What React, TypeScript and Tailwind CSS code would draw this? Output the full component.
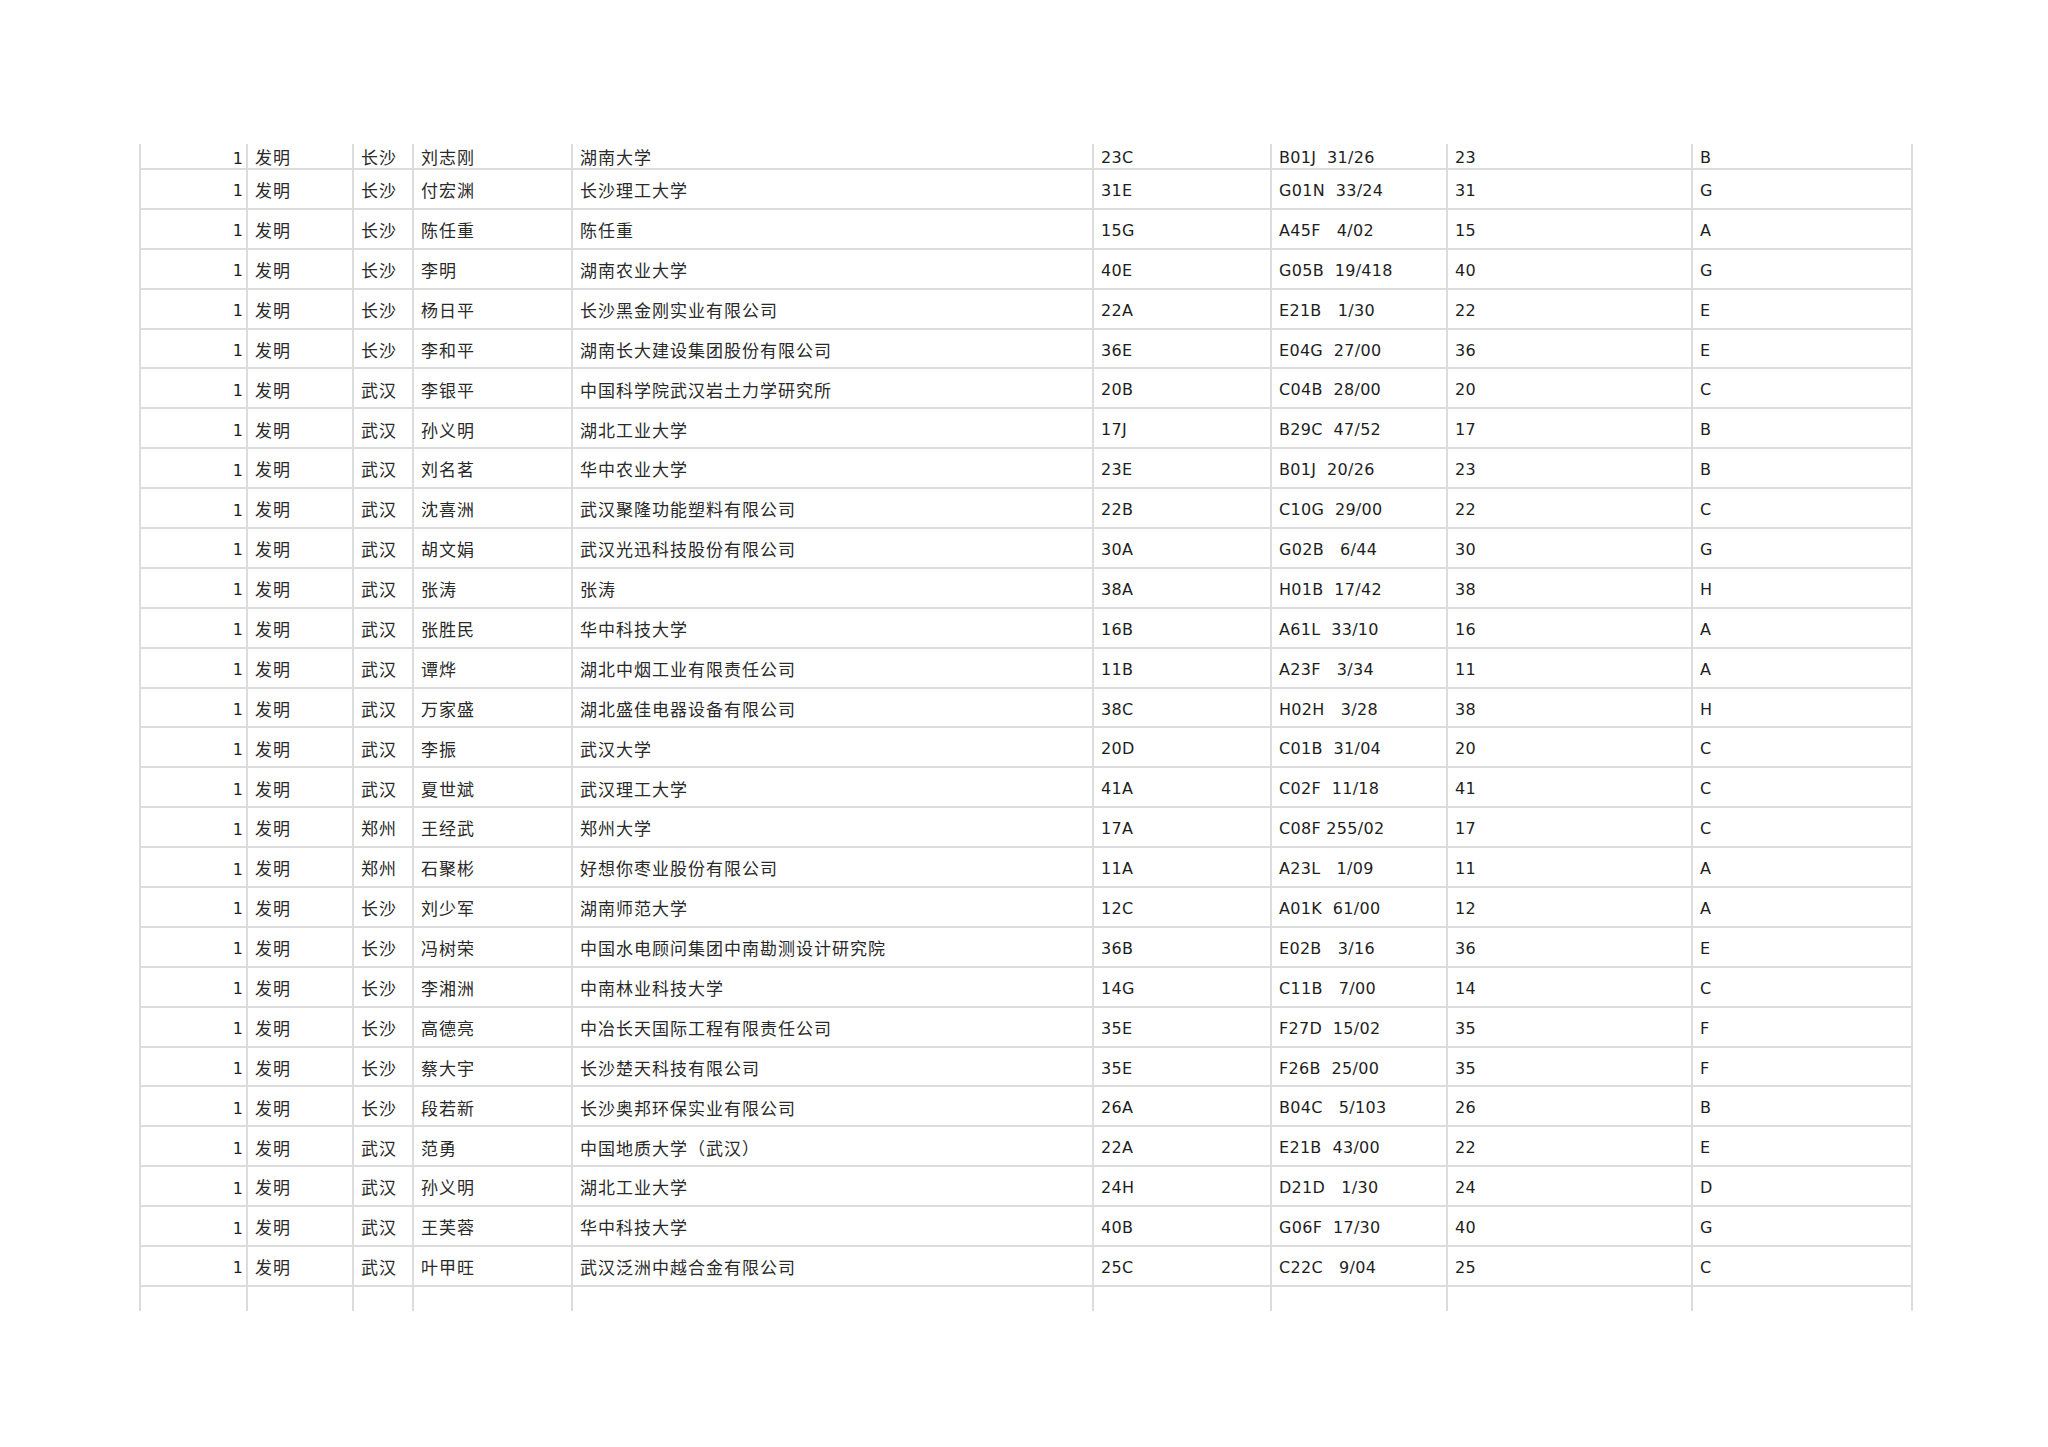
const rows: string[][] = [
  ["长沙", "刘志刚", "湖南大学", "23C", "B01J  31/26", "23", "B"],
  ["长沙", "付宏渊", "长沙理工大学", "31E", "G01N  33/24", "31", "G"],
  ["长沙", "陈任重", "陈任重", "15G", "A45F   4/02", "15", "A"],
  ["长沙", "李明", "湖南农业大学", "40E", "G05B  19/418", "40", "G"],
  ["长沙", "杨日平", "长沙黑金刚实业有限公司", "22A", "E21B   1/30", "22", "E"],
  ["长沙", "李和平", "湖南长大建设集团股份有限公司", "36E", "E04G  27/00", "36", "E"],
  ["武汉", "李银平", "中国科学院武汉岩土力学研究所", "20B", "C04B  28/00", "20", "C"],
  ["武汉", "孙义明", "湖北工业大学", "17J", "B29C  47/52", "17", "B"],
  ["武汉", "刘名茗", "华中农业大学", "23E", "B01J  20/26", "23", "B"],
  ["武汉", "沈喜洲", "武汉聚隆功能塑料有限公司", "22B", "C10G  29/00", "22", "C"],
  ["武汉", "胡文娟", "武汉光迅科技股份有限公司", "30A", "G02B   6/44", "30", "G"],
  ["武汉", "张涛", "张涛", "38A", "H01B  17/42", "38", "H"],
  ["武汉", "张胜民", "华中科技大学", "16B", "A61L  33/10", "16", "A"],
  ["武汉", "谭烨", "湖北中烟工业有限责任公司", "11B", "A23F   3/34", "11", "A"],
  ["武汉", "万家盛", "湖北盛佳电器设备有限公司", "38C", "H02H   3/28", "38", "H"],
  ["武汉", "李振", "武汉大学", "20D", "C01B  31/04", "20", "C"],
  ["武汉", "夏世斌", "武汉理工大学", "41A", "C02F  11/18", "41", "C"],
  ["郑州", "王经武", "郑州大学", "17A", "C08F 255/02", "17", "C"],
  ["郑州", "石聚彬", "好想你枣业股份有限公司", "11A", "A23L   1/09", "11", "A"],
  ["长沙", "刘少军", "湖南师范大学", "12C", "A01K  61/00", "12", "A"],
  ["长沙", "冯树荣", "中国水电顾问集团中南勘测设计研究院", "36B", "E02B   3/16", "36", "E"],
  ["长沙", "李湘洲", "中南林业科技大学", "14G", "C11B   7/00", "14", "C"],
  ["长沙", "高德亮", "中冶长天国际工程有限责任公司", "35E", "F27D  15/02", "35", "F"],
  ["长沙", "蔡大宇", "长沙楚天科技有限公司", "35E", "F26B  25/00", "35", "F"],
  ["长沙", "段若新", "长沙奥邦环保实业有限公司", "26A", "B04C   5/103", "26", "B"],
  ["武汉", "范勇", "中国地质大学（武汉）", "22A", "E21B  43/00", "22", "E"],
  ["武汉", "孙义明", "湖北工业大学", "24H", "D21D   1/30", "24", "D"],
  ["武汉", "王芙蓉", "华中科技大学", "40B", "G06F  17/30", "40", "G"],
  ["武汉", "叶甲旺", "武汉泛洲中越合金有限公司", "25C", "C22C   9/04", "25", "C"],
];

const grid =
  "grid grid-cols-[107px_106px_60px_159px_521px_178px_176px_245px_222px]";
const cell = "flex items-center border-l-2 border-[#dcdcdc] overflow-hidden whitespace-pre";
const cjk =
  "pl-[7px] pt-[2px] font-['Noto_Sans_CJK_SC',sans-serif] font-normal text-[17px] tracking-[1px] text-[#2a2a2a]";
const latin =
  "pl-[7px] pt-[4px] font-['DejaVu_Sans',sans-serif] text-[16px] tracking-[0.3px] text-[#1e1e1e]";

function Row({ r, first }: { r: string[]; first: boolean }) {
  return (
    <div className={`${grid} ${first ? "h-[26px]" : "h-[39.9px]"} border-b-2 border-[#dcdcdc]`}>
      <div className={`${cell} justify-end pr-[3px] pt-[5px] font-['DejaVu_Sans',sans-serif] text-[16px] text-[#1e1e1e]`}>1</div>
      <div className={`${cell} ${cjk}`}>发明</div>
      <div className={`${cell} ${cjk}`}>{r[0]}</div>
      <div className={`${cell} ${cjk}`}>{r[1]}</div>
      <div className={`${cell} ${cjk}`}>{r[2]}</div>
      <div className={`${cell} ${latin}`}>{r[3]}</div>
      <div className={`${cell} ${latin}`}>{r[4]}</div>
      <div className={`${cell} ${latin}`}>{r[5]}</div>
      <div className={`${cell} ${latin} border-r-2`}>{r[6]}</div>
    </div>
  );
}

export default function App() {
  return (
    <div className="w-[2048px] h-[1447px] bg-white pt-[144px] pl-[139px]">
      <div className="flex flex-col w-[1774px]">
        {rows.map((r, i) => (
          <Row key={i} r={r} first={i === 0} />
        ))}
        <div className={`${grid} h-[24px]`}>
          <div className={cell} />
          <div className={cell} />
          <div className={cell} />
          <div className={cell} />
          <div className={cell} />
          <div className={cell} />
          <div className={cell} />
          <div className={cell} />
          <div className={`${cell} border-r-2`} />
        </div>
      </div>
    </div>
  );
}
